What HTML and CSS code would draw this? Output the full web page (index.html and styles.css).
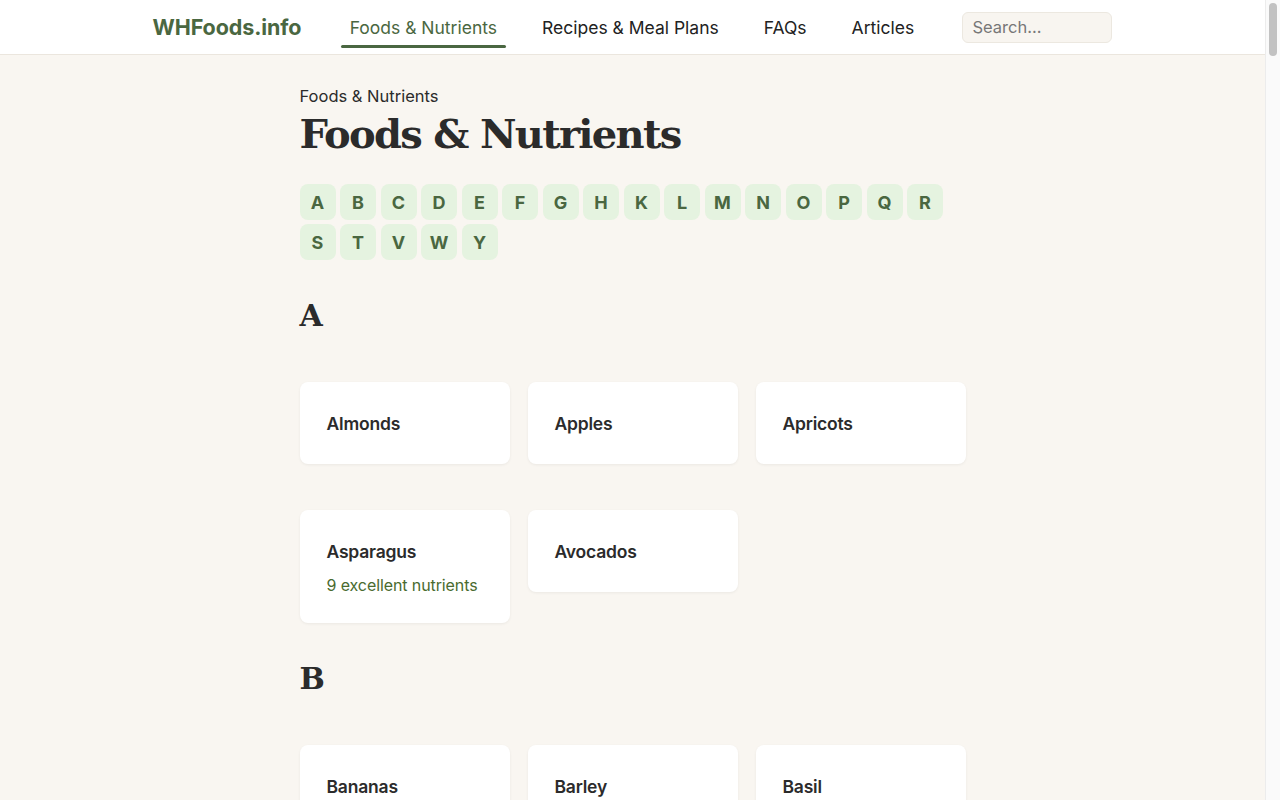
FILE: index.html
```html
<!DOCTYPE html>
<html lang="en">
<head>
<meta charset="utf-8">
<title>Foods &amp; Nutrients - WHFoods.info</title>
<link rel="stylesheet" href="styles.css">
</head>
<body>
<div class="page">
<header class="site-header">
  <div class="header-inner">
    <a class="logo" href="#">WHFoods.info</a>
    <nav class="main-nav">
      <a class="nav-link active" href="#">Foods &amp; Nutrients</a>
      <a class="nav-link" href="#">Recipes &amp; Meal Plans</a>
      <a class="nav-link" href="#">FAQs</a>
      <a class="nav-link" href="#">Articles</a>
    </nav>
    <input class="search" type="text" placeholder="Search...">
  </div>
</header>
<main class="content">
  <div class="breadcrumb">Foods &amp; Nutrients</div>
  <h1 class="page-title">Foods &amp; Nutrients</h1>
  <div class="letters">
    <a class="letter" href="#">A</a><a class="letter" href="#">B</a><a class="letter" href="#">C</a><a class="letter" href="#">D</a><a class="letter" href="#">E</a><a class="letter" href="#">F</a><a class="letter" href="#">G</a><a class="letter" href="#">H</a><a class="letter" href="#">K</a><a class="letter" href="#">L</a><a class="letter" href="#">M</a><a class="letter" href="#">N</a><a class="letter" href="#">O</a><a class="letter" href="#">P</a><a class="letter" href="#">Q</a><a class="letter" href="#">R</a><a class="letter" href="#">S</a><a class="letter" href="#">T</a><a class="letter" href="#">V</a><a class="letter" href="#">W</a><a class="letter" href="#">Y</a>
  </div>

  <section class="group">
    <h2 class="group-title">A</h2>
    <div class="cards">
      <a class="card" href="#"><span class="card-name">Almonds</span></a>
      <a class="card" href="#"><span class="card-name">Apples</span></a>
      <a class="card" href="#"><span class="card-name">Apricots</span></a>
      <a class="card" href="#"><span class="card-name">Asparagus</span><span class="card-sub">9 excellent nutrients</span></a>
      <a class="card" href="#"><span class="card-name">Avocados</span></a>
    </div>
  </section>

  <section class="group">
    <h2 class="group-title">B</h2>
    <div class="cards">
      <a class="card" href="#"><span class="card-name">Bananas</span></a>
      <a class="card" href="#"><span class="card-name">Barley</span></a>
      <a class="card" href="#"><span class="card-name">Basil</span></a>
      <a class="card" href="#"><span class="card-name">Beets</span></a>
      <a class="card" href="#"><span class="card-name">Bell Peppers</span></a>
      <a class="card" href="#"><span class="card-name">Black Beans</span></a>
    </div>
  </section>
</main>
</div>
<div class="scrollbar" aria-hidden="true"><div class="scroll-thumb"></div></div>
</body>
</html>
```
FILE: styles.css
```css
html, body {
  margin: 0;
  padding: 0;
}
body {
  background: #f9f6f1;
  color: #2b2b2b;
  font-family: Inter, "Noto Sans", sans-serif;
}
.page {
  margin-right: 15px;
}
.scrollbar {
  position: fixed;
  top: 0;
  right: 0;
  width: 14px;
  height: 100vh;
  background: #fafafa;
  border-left: 1px solid #ececec;
}
.scroll-thumb {
  margin: 3px 0 0 3px;
  width: 8px;
  height: 53px;
  border-radius: 4px;
  background: #c2c2c2;
}
a {
  text-decoration: none;
  color: inherit;
}
.site-header {
  background: #ffffff;
  border-bottom: 1px solid #ebe6de;
  height: 54px;
}
.header-inner {
  max-width: 960px;
  margin: 0 auto;
  height: 54px;
  display: flex;
  align-items: center;
  justify-content: space-between;
}
.logo {
  color: #4a6741;
  font-weight: 700;
  font-size: 21.5px;
  letter-spacing: -0.1px;
}
.main-nav {
  display: flex;
  gap: 27px;
  height: 54px;
  align-items: stretch;
}
.nav-link {
  display: flex;
  align-items: center;
  padding: 0 9px;
  font-size: 17.5px;
  color: #222;
  position: relative;
}
.nav-link.active {
  color: #4a6741;
}
.nav-link.active::after {
  content: "";
  position: absolute;
  left: 0;
  right: 0;
  bottom: 6px;
  height: 3px;
  background: #4a6741;
  border-radius: 2px;
}
.search {
  width: 150px;
  height: 31px;
  box-sizing: border-box;
  background: #f8f5f0;
  border: 1px solid #ece8e0;
  border-radius: 6px;
  padding: 0 9px;
  font-family: inherit;
  font-size: 16.5px;
  color: #333;
}
.search::placeholder {
  color: #777;
}
.content {
  width: 666px;
  margin: 0 auto;
  padding: 29px 0 60px;
}
.breadcrumb {
  font-size: 16.5px;
  line-height: 24px;
  color: #2b2b2b;
}
.page-title {
  font-family: "DejaVu Serif", Georgia, serif;
  font-weight: 700;
  font-size: 40px;
  line-height: 52px;
  margin: 0 0 24px;
  color: #2b2b2b;
  letter-spacing: -1.7px;
}
.letters {
  display: flex;
  flex-wrap: wrap;
  gap: 4px 4.5px;
}
.letter {
  width: 36px;
  height: 36px;
  border-radius: 8px;
  background: #e5f3e0;
  color: #4a6741;
  font-weight: 700;
  font-size: 18px;
  display: flex;
  align-items: center;
  justify-content: center;
}
.group {
  margin-top: 37px;
}
.group-title {
  font-family: "DejaVu Serif", Georgia, serif;
  font-weight: 700;
  font-size: 30px;
  line-height: 38px;
  margin: 0 0 47px;
  color: #2b2b2b;
}
.cards {
  display: grid;
  grid-template-columns: repeat(3, 1fr);
  column-gap: 18px;
  row-gap: 46px;
  align-items: start;
}
.card {
  background: #fff;
  border-radius: 8px;
  box-shadow: 0 1px 3px rgba(0, 0, 0, 0.06);
  padding: 27px 27px 25px;
  display: flex;
  flex-direction: column;
}
.card-name {
  font-size: 17.5px;
  font-weight: 600;
  line-height: 30px;
  color: #2b2b2b;
  letter-spacing: -0.2px;
}
.card-sub {
  font-size: 16px;
  line-height: 25px;
  margin-top: 6px;
  color: #4a6b2f;
  white-space: nowrap;
  letter-spacing: -0.1px;
}
```
